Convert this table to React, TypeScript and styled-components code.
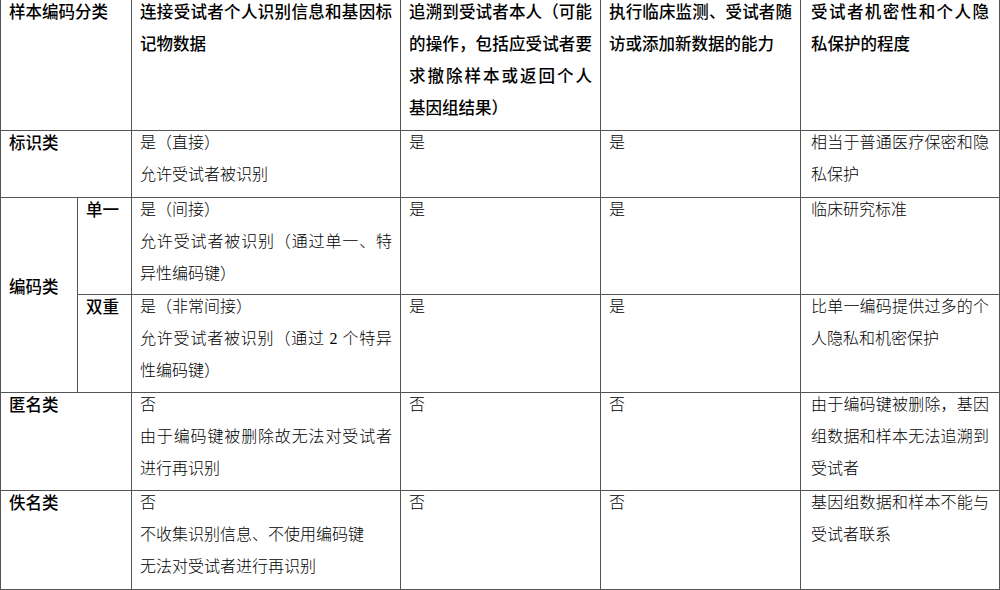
import { Fragment } from "react";
import styled, { createGlobalStyle } from "styled-components";

const GlobalStyle = createGlobalStyle`
  html, body {
    margin: 0;
    padding: 0;
    background: #ffffff;
  }
`;

const Table = styled.div`
  width: 1000px;
  box-sizing: border-box;
  display: grid;
  grid-template-columns: 77px 54px 269px 200px 200px 199px;
  grid-template-rows: 131px 67px 97px 98px 98px 99px;
  border-left: 1px solid #555;
  color: #000;
`;

const Cell = styled.div<{ $head?: boolean; $span?: number; $rows?: number; $middle?: boolean; $pad?: number }>`
  box-sizing: border-box;
  grid-column: span ${(p) => p.$span ?? 1};
  grid-row: span ${(p) => p.$rows ?? 1};
  border-right: 1px solid #555;
  border-bottom: 1px solid #555;
  padding: 0 ${(p) => p.$pad ?? 8}px ${(p) => (p.$middle ? 12 : 0)}px ${(p) => p.$pad ?? 8}px;
  display: flex;
  flex-direction: column;
  justify-content: ${(p) => (p.$middle ? "center" : "flex-start")};
  font-family: ${(p) =>
    p.$head
      ? '"Liberation Sans", "Noto Sans CJK SC", sans-serif'
      : '"Liberation Serif", "Noto Sans CJK SC", serif'};
  font-size: ${(p) => (p.$head ? "16.5px" : "16px")};
  font-weight: ${(p) => (p.$head ? 500 : 300)};
  line-height: 32px;
  text-align: justify;
  overflow: hidden;

  & > p:first-child {
    margin-top: -4px;
  }
`;

const Para = styled.p<{ $fill?: boolean }>`
  margin: 0;
  text-align-last: ${(p) => (p.$fill ? "justify" : "auto")};
`;

type Body = string[];

const rows: { label: string; sub?: string; cells: Body[] }[] = [
  {
    label: "标识类",
    cells: [["是（直接）", "允许受试者被识别"], ["是"], ["是"], ["相当于普通医疗保密和隐私保护"]],
  },
  {
    label: "编码类",
    sub: "单一",
    cells: [
      ["是（间接）", "允许受试者被识别（通过单一、特异性编码键）"],
      ["是"],
      ["是"],
      ["临床研究标准"],
    ],
  },
  {
    label: "",
    sub: "双重",
    cells: [
      ["是（非常间接）", "允许受试者被识别（通过 2 个特异性编码键）"],
      ["是"],
      ["是"],
      ["比单一编码提供过多的个人隐私和机密保护"],
    ],
  },
  {
    label: "匿名类",
    cells: [
      ["否", "由于编码键被删除故无法对受试者进行再识别"],
      ["否"],
      ["否"],
      ["由于编码键被删除，基因组数据和样本无法追溯到受试者"],
    ],
  },
  {
    label: "佚名类",
    cells: [
      ["否", "不收集识别信息、不使用编码键", "无法对受试者进行再识别"],
      ["否"],
      ["否"],
      ["基因组数据和样本不能与受试者联系"],
    ],
  },
];

const App = () => {
  return (
    <>
      <GlobalStyle />
      <Table>
        <Cell $head $span={2}>
          <Para>样本编码分类</Para>
        </Cell>
        <Cell $head>
          <Para>连接受试者个人识别信息和基因标记物数据</Para>
        </Cell>
        <Cell $head>
          <Para $fill>追溯到受试者本人（可能的操作，包括应受试者要求撤除样本或返回个人</Para>
          <Para>基因组结果）</Para>
        </Cell>
        <Cell $head>
          <Para>执行临床监测、受试者随访或添加新数据的能力</Para>
        </Cell>
        <Cell $head $pad={10}>
          <Para>受试者机密性和个人隐私保护的程度</Para>
        </Cell>

        {rows.map((row, i) => (
          <Fragment key={i}>
            {row.sub === undefined && (
              <Cell $head $span={2}>
                <Para>{row.label}</Para>
              </Cell>
            )}
            {row.sub !== undefined && row.label && (
              <Cell $head $rows={2} $middle>
                <Para>{row.label}</Para>
              </Cell>
            )}
            {row.sub !== undefined && (
              <Cell $head>
                <Para>{row.sub}</Para>
              </Cell>
            )}
            {row.cells.map((lines, j) => (
              <Cell key={j} $pad={j === 3 ? 10 : 8}>
                {lines.map((t, k) => (
                  <Para key={k}>{t}</Para>
                ))}
              </Cell>
            ))}
          </Fragment>
        ))}
      </Table>
    </>
  );
};

export default App;
